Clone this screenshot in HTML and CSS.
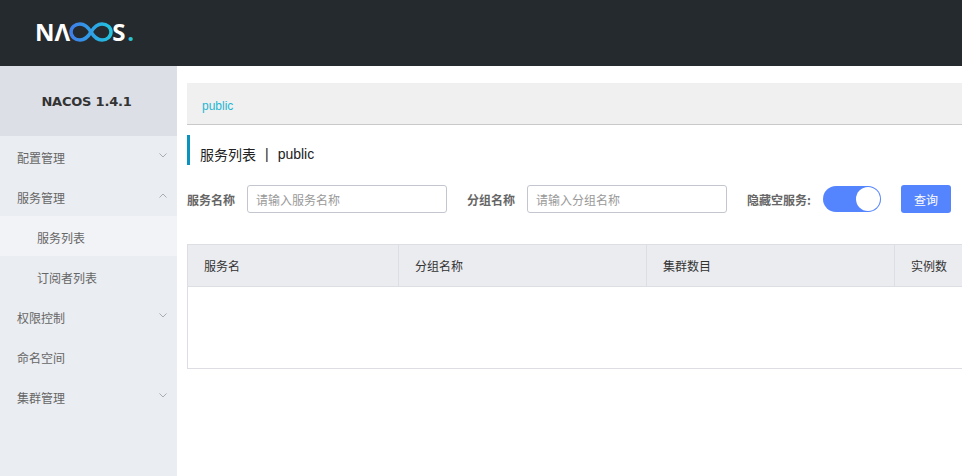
FILE: index.html
```html
<!DOCTYPE html>
<html lang="zh">
<head>
<meta charset="utf-8">
<title>NACOS</title>
<link rel="stylesheet" href="styles.css">
</head>
<body>
<header class="topbar">
  <div class="logo">
    <span class="logo-text">N</span><span class="logo-text logo-a">Λ</span>
    <svg class="logo-inf" width="44" height="20" viewBox="0 0 44 20" aria-hidden="true">
      <defs>
        <linearGradient id="inf" x1="0" x2="1" y1="0" y2="0">
          <stop offset="0" stop-color="#3f7fe8"/>
          <stop offset="0.5" stop-color="#2f9fe6"/>
          <stop offset="1" stop-color="#22c3dc"/>
        </linearGradient>
      </defs>
      <path d="M22 10C19 5 16 2 11 2C6 2 2 5.500 2 10C2 14.500 6 18 11 18C16 18 19 15 22 10C25 5 28 2 33 2C38 2 42 5.500 42 10C42 14.500 38 18 33 18C28 18 25 15 22 10Z" fill="none" stroke="url(#inf)" stroke-width="3.500"/>
    </svg>
    <span class="logo-text logo-s">S</span><span class="logo-dot">.</span>
  </div>
</header>
<div class="layout">
  <aside class="sidebar">
    <div class="version">NACOS 1.4.1</div>
    <nav class="menu">
      <div class="menu-item"><span>配置管理</span><svg class="chev" width="8" height="5" viewBox="0 0 8 5"><path d="M.5.500 4 4 7.500.500"/></svg></div>
      <div class="menu-item"><span>服务管理</span><svg class="chev" width="8" height="5" viewBox="0 0 8 5"><path d="M.5 4.500 4 1 7.500 4.500"/></svg></div>
      <div class="menu-item sub active"><span>服务列表</span></div>
      <div class="menu-item sub"><span>订阅者列表</span></div>
      <div class="menu-item"><span>权限控制</span><svg class="chev" width="8" height="5" viewBox="0 0 8 5"><path d="M.5.500 4 4 7.500.500"/></svg></div>
      <div class="menu-item"><span>命名空间</span></div>
      <div class="menu-item"><span>集群管理</span><svg class="chev" width="8" height="5" viewBox="0 0 8 5"><path d="M.5.500 4 4 7.500.500"/></svg></div>
    </nav>
  </aside>
  <main class="main">
    <div class="ns-bar"><a class="ns-link">public</a></div>
    <h1 class="page-title"><span>服务列表</span><span class="sep">|</span><span class="latin">public</span></h1>
    <form class="filters">
      <label class="field-label">服务名称</label>
      <input class="field-input" placeholder="请输入服务名称">
      <label class="field-label label-second">分组名称</label>
      <input class="field-input" placeholder="请输入分组名称">
      <label class="field-label label-third">隐藏空服务:</label>
      <span class="switch"><span class="knob"></span></span>
      <button type="button" class="query">查询</button>
    </form>
    <div class="table">
      <div class="thead">
        <div class="th col1">服务名</div>
        <div class="th col2">分组名称</div>
        <div class="th col3">集群数目</div>
        <div class="th col4">实例数</div>
      </div>
      <div class="tbody"></div>
    </div>
  </main>
</div>
</body>
</html>
```
FILE: styles.css
```css
* { box-sizing: border-box; }
html, body { margin: 0; height: 100%; overflow: hidden; }
body {
  width: 962px;
  height: 476px;
  background: #fff;
  font-family: "Noto Sans CJK SC", "Open Sans", sans-serif;
  font-size: 12px;
  color: #333;
}
.topbar { height: 66px; background: #252a2f; display: flex; align-items: center; padding-left: 35px; }
.logo { display: flex; align-items: center; height: 24px; margin-top: -2px; }
.logo-text {
  font-family: "Open Sans", sans-serif;
  font-size: 24px;
  font-weight: 700;
  color: #fff;
  line-height: 24px;
}
.logo-a { margin-right: -1px; }
.logo-inf { flex: none; }
.logo-s { margin-left: -1px; }
.logo-dot { font-family: "Open Sans", sans-serif; font-size: 24px; font-weight: 700; color: #2cc4d4; line-height: 24px; margin-left: 2px; }
.layout { display: flex; height: 410px; }
.sidebar { width: 177px; flex: none; background: #eaedf1; }
.version {
  height: 70px;
  background: #dcdfe6;
  display: flex;
  align-items: center;
  justify-content: center;
  font-family: "DejaVu Sans", sans-serif;
  font-size: 13px;
  font-weight: 700;
  letter-spacing: -.2px;
  color: #333;
  padding-right: 4px;
}
.menu-item {
  height: 40px;
  padding: 4px 10px 0 17px;
  display: flex;
  align-items: center;
  justify-content: space-between;
  color: #666;
  line-height: 18px;
}
.menu-item.sub { padding-left: 37px; }
.menu-item.active { background: #f2f3f7; }
.chev { fill: none; stroke: #a9adb3; stroke-width: 1; margin-top: -6px; }
.main { flex: 1; min-width: 0; padding: 17px 0 0 10px; overflow: hidden; }
.ns-bar {
  height: 42px;
  background: #f0f0f0;
  border-bottom: 1px solid #c9c9c9;
  padding: 14px 0 0 15px;
}
.ns-link { font-family: "Liberation Sans", sans-serif; font-size: 12px; line-height: 18px; color: #1fb6d2; display: block; }
.page-title {
  margin: 10px 0 0;
  height: 30px;
  border-left: 3px solid #0b93bf;
  padding: 7px 0 0 10px;
  display: flex;
  align-items: center;
  font-size: 14px;
  font-weight: 400;
  color: #222;
}
.sep { margin: 0 9px; font-family: "Liberation Sans", sans-serif; }
.latin { font-family: "Liberation Sans", sans-serif; }
.filters { display: flex; align-items: center; height: 28px; margin-top: 20px; }
.field-label { font-weight: 700; color: #666; white-space: nowrap; }
.label-second { margin-left: 20px; }
.label-third { margin-left: 20px; }
.field-input {
  width: 200px;
  height: 28px;
  margin-left: 12px;
  padding: 0 8px;
  border: 1px solid #c4c6cf;
  border-radius: 3px;
  font: inherit;
  outline: none;
}
.field-input::placeholder { color: #999; opacity: 1; }
.switch {
  width: 58px;
  height: 26px;
  margin-left: 12px;
  border-radius: 13px;
  background: #5584ff;
  display: flex;
  justify-content: flex-end;
  align-items: center;
  padding-right: 1px;
  flex: none;
}
.knob { width: 24px; height: 24px; border-radius: 50%; background: #fff; }
.query {
  width: 50px;
  height: 28px;
  margin-left: 20px;
  border: 0;
  border-radius: 3px;
  background: #5584ff;
  color: #fff;
  font: inherit;
  padding: 0;
}
.table { width: 900px; margin-top: 31px; border: 1px solid #dcdee3; }
.thead { display: flex; height: 42px; background: #ebecf0; border-bottom: 1px solid #dcdee3; align-items: stretch; }
.th { padding: 0 16px; display: flex; align-items: center; color: #333; border-right: 1px solid #dcdee3; flex: none; }
.col1 { width: 211px; }
.col2 { width: 248px; }
.col3 { width: 248px; }
.col4 { width: 120px; }
.tbody { height: 81px; background: #fff; }
```
